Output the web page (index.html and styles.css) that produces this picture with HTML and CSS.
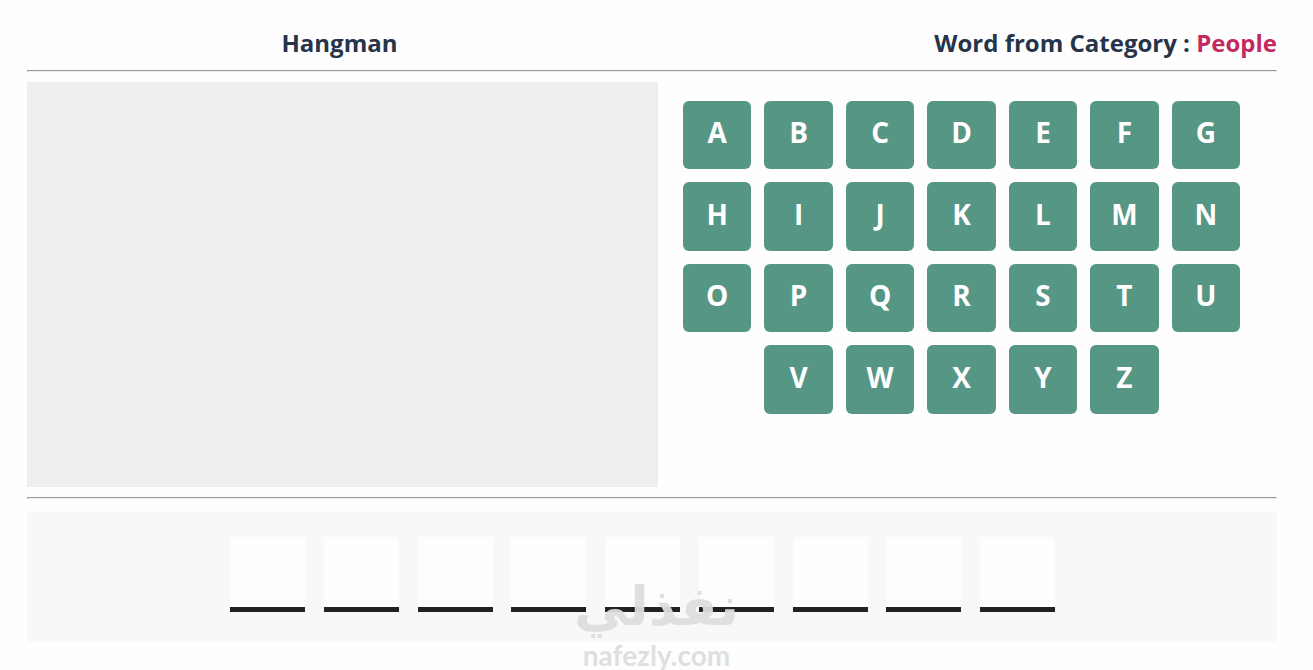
FILE: index.html
```
<!DOCTYPE html>
<html lang="en">
<head>
<meta charset="utf-8">
<meta name="viewport" content="width=device-width, initial-scale=1">
<title>Hangman</title>
<link rel="stylesheet" href="styles.css">
</head>
<body>
<main class="game">
  <header class="header">
    <h1 class="title">Hangman</h1>
    <p class="category">Word from Category : <span class="category-name">People</span></p>
  </header>
  <hr class="rule">
  <section class="board">
    <div class="drawing"></div>
    <div class="letters">
      <button class="key" type="button">A</button>
      <button class="key" type="button">B</button>
      <button class="key" type="button">C</button>
      <button class="key" type="button">D</button>
      <button class="key" type="button">E</button>
      <button class="key" type="button">F</button>
      <button class="key" type="button">G</button>
      <button class="key" type="button">H</button>
      <button class="key" type="button">I</button>
      <button class="key" type="button">J</button>
      <button class="key" type="button">K</button>
      <button class="key" type="button">L</button>
      <button class="key" type="button">M</button>
      <button class="key" type="button">N</button>
      <button class="key" type="button">O</button>
      <button class="key" type="button">P</button>
      <button class="key" type="button">Q</button>
      <button class="key" type="button">R</button>
      <button class="key" type="button">S</button>
      <button class="key" type="button">T</button>
      <button class="key" type="button">U</button>
      <button class="key key-last-row" type="button">V</button>
      <button class="key" type="button">W</button>
      <button class="key" type="button">X</button>
      <button class="key" type="button">Y</button>
      <button class="key" type="button">Z</button>
    </div>
  </section>
  <hr class="rule">
  <section class="guess">
    <div class="slots">
      <span class="slot"></span>
      <span class="slot"></span>
      <span class="slot"></span>
      <span class="slot"></span>
      <span class="slot"></span>
      <span class="slot"></span>
      <span class="slot"></span>
      <span class="slot"></span>
      <span class="slot"></span>
    </div>
  </section>
</main>
<div class="watermark">
  <span class="mark-arabic" lang="ar" dir="rtl">نفذلي</span>
  <span class="mark-site">nafezly.com</span>
</div>
</body>
</html>
```
FILE: styles.css
```
* {
  box-sizing: border-box;
}

body {
  margin: 0;
  background: #fefefe;
  color: #253449;
  font-family: "Open Sans", "Noto Sans", sans-serif;
}

.game {
  padding: 16px 36px 0 27px;
}

.header {
  display: grid;
  grid-template-columns: 1fr 1fr;
  align-items: center;
  height: 54px;
}

.title,
.category {
  margin: 0;
  font-size: 24px;
  font-weight: 700;
  line-height: 32px;
  white-space: nowrap;
}

.title {
  text-align: center;
}

.category {
  text-align: right;
}

.category-name {
  color: #c22a5f;
}

.rule {
  margin: 0;
  border: 1px solid;
  border-color: #999 #eee #eee #999;
}

.board {
  display: grid;
  grid-template-columns: 631fr 619fr;
  margin: 10px 0;
}

.drawing {
  min-height: 405px;
  background: #eee;
}

.letters {
  display: grid;
  grid-template-columns: repeat(7, 1fr);
  gap: 13px;
  align-content: start;
  padding: 19px 37px 0 25px;
}

.key {
  aspect-ratio: 1;
  padding: 0 0 6px;
  border: 0;
  border-radius: 6px;
  background: #569685;
  color: #fff;
  font: 700 28px/36px "Open Sans", "Noto Sans", sans-serif;
  cursor: pointer;
}

.key-last-row {
  grid-column-start: 2;
}

.guess {
  display: flex;
  justify-content: center;
  margin-top: 13px;
  padding: 25px 19px 30px 0;
  background: #f8f8f8;
}

.slots {
  display: flex;
  justify-content: space-between;
  width: 825px;
}

.slot {
  width: 75px;
  height: 75px;
  border-bottom: 5px solid #222;
  background: #fdfdfd;
}

.watermark {
  position: absolute;
  top: 574px;
  left: 50%;
  display: flex;
  flex-direction: column;
  align-items: center;
  width: 160px;
  margin-left: -80px;
  color: rgba(221, 221, 221, 0.94);
  pointer-events: none;
}

.mark-arabic {
  font: 700 54px/66px "DejaVu Sans", sans-serif;
  white-space: nowrap;
}

.mark-site {
  font: 700 28px/30px Lato, sans-serif;
}
```
